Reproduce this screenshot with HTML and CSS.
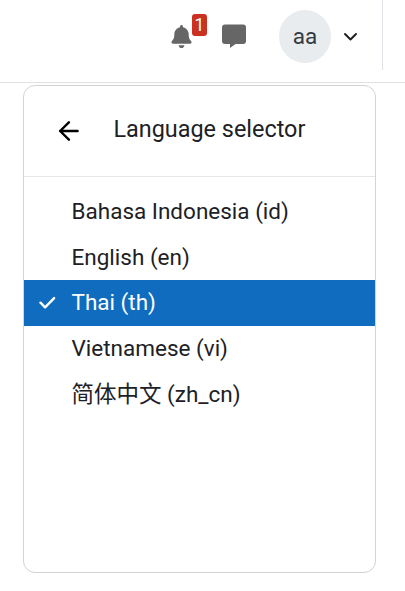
FILE: index.html
```html
<!DOCTYPE html>
<html lang="en">
<head>
  <meta charset="UTF-8">
  <meta name="viewport" content="width=device-width, initial-scale=1.0">
  <title>Language selector</title>
  <link rel="stylesheet" href="styles.css">
</head>
<body>
  <nav class="navbar">
    <button class="nav-icon notifications" aria-label="Notifications">
      <svg width="21" height="23" viewBox="0 0 448 512" fill="currentColor"><path d="M224 512c35.300 0 63.900-28.700 63.900-64H160.100c0 35.300 28.600 64 63.900 64zm215.400-149.700c-19.300-20.800-55.500-52-55.500-154.300 0-77.700-54.500-139.900-127.900-155.200V32c0-17.700-14.300-32-32-32s-32 14.300-32 32v20.800C118.600 68.100 64.100 130.300 64.100 208c0 102.300-36.200 133.500-55.500 154.300C2.600 368.700 0 376.400 0 384c.1 16.400 13 32 32.100 32h383.800c19.100 0 32-15.600 32.100-32 0-7.600-2.600-15.300-8.600-21.700z"/></svg>
      <span class="count">1</span>
    </button>
    <button class="nav-icon messages" aria-label="Messages">
      <svg width="24" height="24" viewBox="0 0 24 24" fill="currentColor"><path d="M3 .5h18a3 3 0 0 1 3 3V17a3 3 0 0 1-3 3h-7.500L8 24v-4H3a3 3 0 0 1-3-3V3.500a3 3 0 0 1 3-3z"/></svg>
    </button>
    <button class="user-menu">
      <span class="avatar">aa</span>
      <svg class="chevron" width="15" height="9" viewBox="0 0 15 9" fill="none" stroke="currentColor" stroke-width="2" stroke-linecap="round" stroke-linejoin="round"><path d="M2 2l5.500 5.500L13 2"/></svg>
    </button>
    <div class="divider"></div>
  </nav>

  <div class="dropdown">
    <div class="dropdown-header">
      <button class="back" aria-label="Back">
        <svg width="21" height="20" viewBox="0 0 21 20" fill="none" stroke="currentColor" stroke-width="2.400" stroke-linecap="round" stroke-linejoin="round"><path d="M10.900 1.300L2.100 10l8.800 8.700M2.100 10h17.500"/></svg>
      </button>
      <span class="title">Language selector</span>
    </div>
    <div class="languages">
      <a class="item">Bahasa Indonesia (id)</a>
      <a class="item">English (en)</a>
      <a class="item active">
        <svg class="check" width="17" height="13" viewBox="0 0 17 13" fill="none" stroke="currentColor" stroke-width="2.400" stroke-linecap="round" stroke-linejoin="round"><path d="M1.500 6.700l4.600 4.600 9-9.200"/></svg>
        Thai (th)
      </a>
      <a class="item">Vietnamese (vi)</a>
      <a class="item">简体中文 (zh_cn)</a>
    </div>
  </div>
</body>
</html>
```

FILE: styles.css
```css
* {
  margin: 0;
  padding: 0;
  box-sizing: border-box;
}

body {
  background: #fff;
  color: #1d2125;
  font-family: Roboto, "Noto Sans CJK SC", sans-serif;
  font-size: 22.5px;
  line-height: 1.5;
}

button {
  background: none;
  border: none;
  color: inherit;
  font: inherit;
  cursor: pointer;
}

svg {
  display: block;
}

/* Top bar */
.navbar {
  display: flex;
  align-items: center;
  height: 83px;
  padding: 0 22px 10px 171px;
  border-bottom: 1px solid #dee2e6;
}

.nav-icon {
  position: relative;
  color: #666;
}

.messages {
  margin-left: 30px;
}

.count {
  position: absolute;
  top: -11px;
  left: 21px;
  width: 15px;
  height: 22px;
  border-radius: 3px;
  background: #ca3120;
  color: #fff;
  font-size: 17.5px;
  line-height: 23px;
  text-align: center;
}

.user-menu {
  display: flex;
  align-items: center;
  gap: 12px;
  margin-left: 33px;
}

.avatar {
  width: 52px;
  height: 53px;
  border-radius: 50%;
  background: #e9ecef;
  color: #343a40;
  line-height: 53px;
}

.chevron {
  margin-top: 1px;
}

.divider {
  align-self: flex-start;
  width: 1px;
  height: 70px;
  margin-left: auto;
  background: #dee2e6;
}

/* Language menu */
.dropdown {
  width: 353px;
  height: 488px;
  margin: 2px 0 0 23px;
  border: 1px solid #d2d3d3;
  border-radius: 12px;
}

.dropdown-header {
  display: flex;
  align-items: center;
  gap: 34.5px;
  height: 91px;
  padding: 0 0 3px 34px;
  border-bottom: 1px solid #e6e7e8;
}

.back {
  padding-top: 2px;
  color: #000;
}

.title {
  font-size: 23.4px;
}

.languages {
  padding-top: 11.75px;
}

.item {
  display: block;
  position: relative;
  height: 45.75px;
  padding: 6px 0 6px 47.5px;
}

.item.active {
  background: #0f6cbf;
  color: #fff;
}

.check {
  position: absolute;
  top: 16px;
  left: 15px;
}
```
